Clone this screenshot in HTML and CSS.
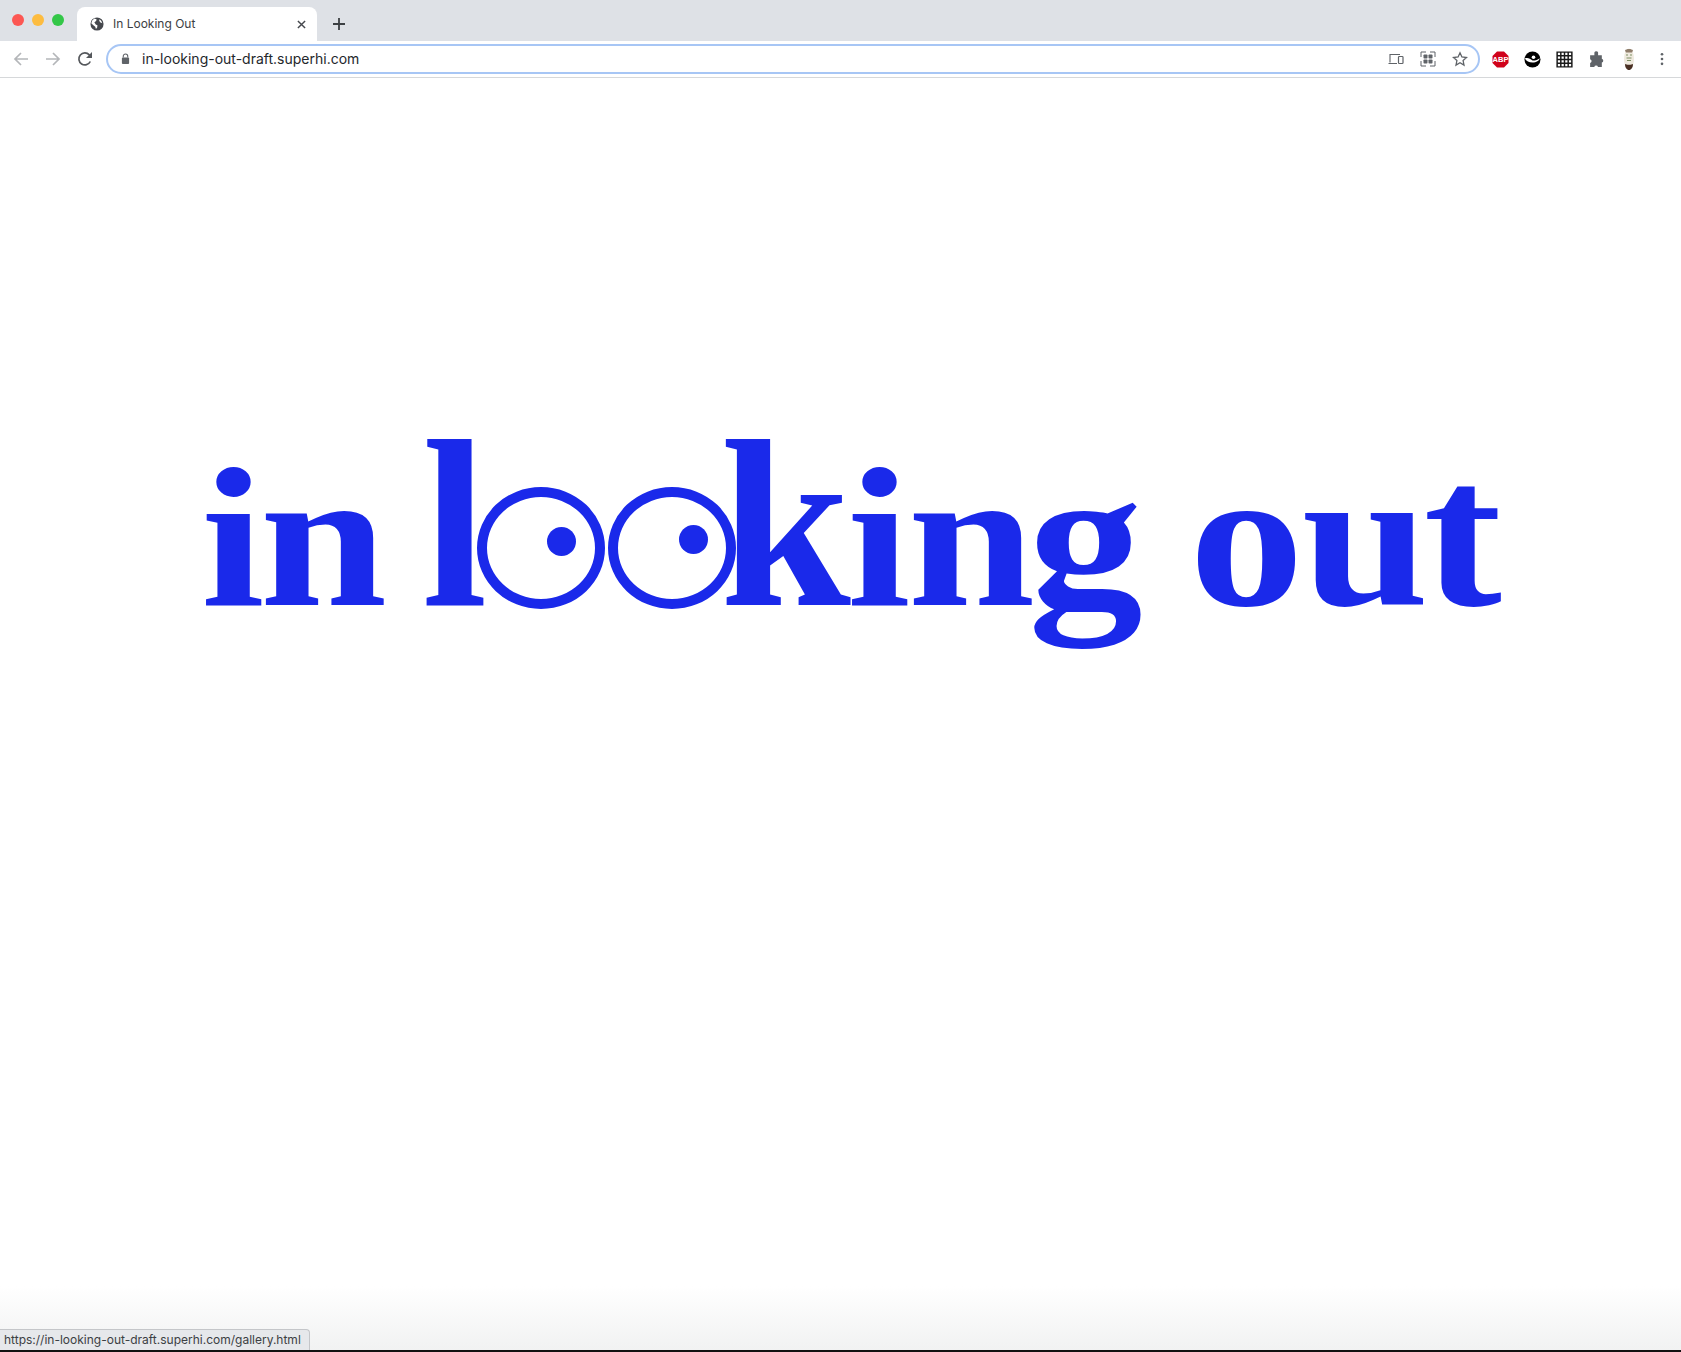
FILE: index.html
```html
<!DOCTYPE html>
<html lang="en">
<head>
<meta charset="utf-8">
<title>In Looking Out</title>
<link rel="stylesheet" href="styles.css">
</head>
<body>
<div class="browser">
  <header class="chrome">
    <div class="tabstrip">
      <div class="lights"><span class="light red"></span><span class="light amber"></span><span class="light green"></span></div>
      <div class="tab">
        <svg class="favicon" viewBox="0 0 16 16"><circle cx="8" cy="8" r="7.5" fill="#45484d"/><path d="M5 1.800 7.500 2.500 7 4.500 5 6 6.500 8.500 8.500 9.500 8.200 12 6.800 13.800 6 11 3.500 9 1.500 7 2.500 4zM11 2.500 13 4.500l1 2.500-2.500-1L10.500 4z" fill="#fff"/></svg>
        <span class="tab-title">In Looking Out</span>
        <svg class="tab-close" viewBox="0 0 10 10"><path d="M1 1l8 8M9 1l-8 8" stroke="#45484d" stroke-width="1.600"/></svg>
      </div>
      <svg class="newtab" viewBox="0 0 12 12"><path d="M6 0v12M0 6h12" stroke="#3c4043" stroke-width="1.800"/></svg>
    </div>
    <div class="toolbar">
      <svg class="nav" viewBox="0 0 16 16"><path d="M15 8H2M8 2 2 8l6 6" fill="none" stroke="#b4b6b9" stroke-width="1.700"/></svg>
      <svg class="nav" viewBox="0 0 16 16"><path d="M1 8h13M8 2l6 6-6 6" fill="none" stroke="#b4b6b9" stroke-width="1.700"/></svg>
      <svg class="nav" viewBox="0 0 16 16"><path d="M13.300 10.500A6 6 0 1 1 12.300 3.800L14.500 6" fill="none" stroke="#55585c" stroke-width="1.700"/><path d="M15 1v6H9z" fill="#55585c"/></svg>
      <div class="omnibox">
        <svg class="lock" viewBox="0 0 10 12"><path d="M2.500 5V3.500a2.500 2.500 0 0 1 5 0V5" fill="none" stroke="#5f6368" stroke-width="1.200"/><rect x="1" y="5" width="8" height="7" rx="1" fill="#5f6368"/></svg>
        <span class="url">in-looking-out-draft.superhi.com</span>
        <div class="omni-actions">
          <svg class="omni-icon" viewBox="0 0 16 16"><path d="M2 11.500V3.500h10M.500 12.500H9" fill="none" stroke="#5f6368" stroke-width="1.100"/><rect x="10.500" y="5.500" width="4.500" height="7" rx=".8" fill="none" stroke="#5f6368" stroke-width="1.200"/></svg>
          <svg class="omni-icon" viewBox="0 0 16 16"><path d="M1 6V1h5M10 1h5v5M15 10v5h-5M6 15H1v-5" fill="none" stroke="#5f6368" stroke-width="1"/><rect x="3.500" y="3.500" width="4" height="4" rx=".8" fill="#5f6368"/><rect x="8.500" y="3.500" width="4" height="4" rx=".8" fill="#5f6368"/><rect x="3.500" y="8.500" width="4" height="4" rx=".8" fill="#5f6368"/><rect x="8.500" y="8.500" width="4" height="4" rx=".8" fill="#5f6368"/></svg>
          <svg class="omni-icon" viewBox="0 0 16 16"><path d="M8 1.800l1.900 4.200 4.600.5-3.400 3.100.9 4.500L8 11.800l-4 2.300.9-4.500L1.500 6.500 6.100 6z" fill="none" stroke="#5f6368" stroke-width="1.300"/></svg>
        </div>
      </div>
      <div class="extensions">
        <svg class="ext" viewBox="0 0 17 17"><path d="M5 .5h7L16.500 5v7L12 16.500H5L.5 12V5z" fill="#d0021b"/><text class="abp" x="8.500" y="11.300" text-anchor="middle">ABP</text></svg>
        <svg class="ext" viewBox="0 0 17 17"><circle cx="8.500" cy="8.500" r="8" fill="#000"/><path d="M.8 7.500c3-1 5 0 7.700 2 2.500.3 5-.8 7.200-2.300-.5 2.800-3.200 4-7.200 4.300C5 11.500 2.300 10 .8 7.500z" fill="#fff"/><circle cx="9.500" cy="6.200" r="1.800" fill="#fff"/></svg>
        <svg class="ext" viewBox="0 0 15 15"><path d="M1 1h13v13H1zM4.250 1v13M7.500 1v13M10.750 1v13M1 4.250h13M1 7.500h13M1 10.750h13" fill="none" stroke="#1a1a1a" stroke-width="1.300"/></svg>
        <svg class="ext" viewBox="0 0 16 16"><path d="M6 1.500a1.800 1.800 0 0 1 3.500 0V4H13v3.400a1.800 1.800 0 0 1 0 3.500V15H9.400a1.800 1.800 0 0 0-3.500 0H2v-3.800a1.800 1.800 0 0 0 0-3.500V4h4z" fill="#5f6368"/></svg>
        <svg class="ext avatar" viewBox="0 0 12 22"><ellipse cx="6" cy="11" rx="5" ry="10.500" fill="#efeadf"/><path d="M2 2.500C3 .5 9 .5 10 2.500L9 4.500H3z" fill="#8f7d6b"/><path d="M2 16c1 .4 2 .7 4 .7s3-.3 4-.7c0 3.500-1.800 6-4 6s-4-2.500-4-6z" fill="#4a3024"/><path d="M3 7h2M7 7h2M3.500 10h5M4 12.500h4" stroke="#7e8f64" stroke-width="1"/></svg>
      </div>
      <svg class="menu" viewBox="0 0 4 16"><circle cx="2" cy="2.500" r="1.500" fill="#5f6368"/><circle cx="2" cy="8" r="1.500" fill="#5f6368"/><circle cx="2" cy="13.500" r="1.500" fill="#5f6368"/></svg>
    </div>
  </header>
  <main class="page">
    <h1 class="word">
      <span class="g g-i1">i</span><span class="g g-n1">n</span>
      <span class="g tall g-l">l</span>
      <span class="eye eye-a"><span class="pupil"></span></span>
      <span class="eye eye-b"><span class="pupil"></span></span>
      <span class="g tall g-k">k</span><span class="g g-i2">i</span><span class="g g-n2">n</span><span class="g g-g">g</span>
      <span class="g g-o">o</span><span class="g g-u">u</span><span class="g g-t">t</span>
    </h1>
  </main>
  <div class="status">https://in-looking-out-draft.superhi.com/gallery.html</div>
</div>
</body>
</html>
```
FILE: styles.css
```css
* { box-sizing: border-box; }
html, body { margin: 0; height: 100%; }
body { font-family: Inter, "Liberation Sans", sans-serif; background: #fff; overflow: hidden; }
.browser { position: relative; height: 100vh; display: flex; flex-direction: column; }

.chrome { flex: none; }
.tabstrip { height: 41px; background: #dee1e6; display: flex; align-items: flex-end; padding-left: 12px; }
.lights { display: flex; gap: 8px; align-self: flex-start; padding-top: 14px; width: 65px; }
.light { width: 12px; height: 12px; border-radius: 50%; }
.red { background: #fc5753; }
.amber { background: #fdbc40; }
.green { background: #33c748; }
.tab { width: 240px; height: 34px; background: #fff; border-radius: 8px 8px 0 0; display: flex; align-items: center; padding: 0 11px 2px 13px; }
.favicon { width: 14px; height: 14px; margin: 2px 9px 0 0; }
.tab-title { font-size: 12px; color: #3c4043; flex: 1; }
.tab-close { width: 9px; height: 9px; margin-top: 2px; }
.newtab { width: 12px; height: 12px; margin: 0 0 11px 16px; }

.toolbar { height: 37px; background: #fff; border-bottom: 1px solid #d6d8da; display: flex; align-items: center; padding: 0 16px 0 13px; }
.nav { width: 16px; height: 16px; margin-right: 16px; }
.nav:nth-child(3) { margin-right: 13px; }
.omnibox { flex: none; width: 1374px; height: 30px; border: 2px solid #a7c6f5; border-radius: 15px; display: flex; align-items: center; padding: 0 10px 1px 13px; }
.lock { width: 9px; height: 11px; margin-right: 12px; }
.url { font-size: 14px; color: #24272b; flex: 1; }
.omni-actions { display: flex; gap: 16px; }
.omni-icon { width: 16px; height: 16px; }
.extensions { display: flex; align-items: center; gap: 15px; margin-left: 12px; }
.ext { width: 17px; height: 17px; }
.abp { font: 700 7.500px "Liberation Sans", sans-serif; fill: #fff; }
.avatar { width: 12px; height: 22px; margin-left: 3px; }
.menu { width: 4px; height: 14px; margin-left: 25px; }

.page { flex: 1; display: flex; justify-content: flex-start; padding: 348px 0 0 203px; background: linear-gradient(#fff 95%, #f1f2f2 100%); border-bottom: 2px solid #111; }
.word { margin: 0; display: flex; align-items: baseline; height: 0; font: 700 214px/1 "Liberation Serif", serif; color: #1a29ea; white-space: nowrap; }
.g { display: block; transform: scale(1.07, .93); transform-origin: 50% 83.750%; }
.tall { transform: scale(1.10, 1.12); }
.g-t { transform: scale(1.10, .98); }
.g-n1 { margin-left: 2px; }
.g-l { margin-left: 41px; }
.eye { display: block; position: relative; width: 128px; height: 122px; border: 10px solid #1a29ea; border-radius: 50%; transform: translateY(4px); }
.eye-a { margin-left: -7px; }
.eye-b { margin-left: 3px; }
.pupil { position: absolute; width: 29px; height: 29px; border-radius: 50%; background: #1a29ea; left: 60px; top: 30px; }
.eye-b .pupil { top: 28px; left: 61px; }
.g-k { margin-left: -10px; }
.g-i2 { margin-left: 4px; }
.g-n2 { margin-left: 4px; }
.g-o { margin-left: 54px; }
.g-u { margin-left: 6px; }
.g-t { margin-left: 2px; }

.status { position: absolute; left: 0; bottom: 2px; height: 21px; width: 310px; padding: 3px 0 0 4px; font-size: 12px; line-height: 14px; color: #3c4043; background: #e6e8eb; border: 1px solid #c4c6c9; border-left: 0; border-bottom: 0; border-radius: 0 4px 0 0; }
```
